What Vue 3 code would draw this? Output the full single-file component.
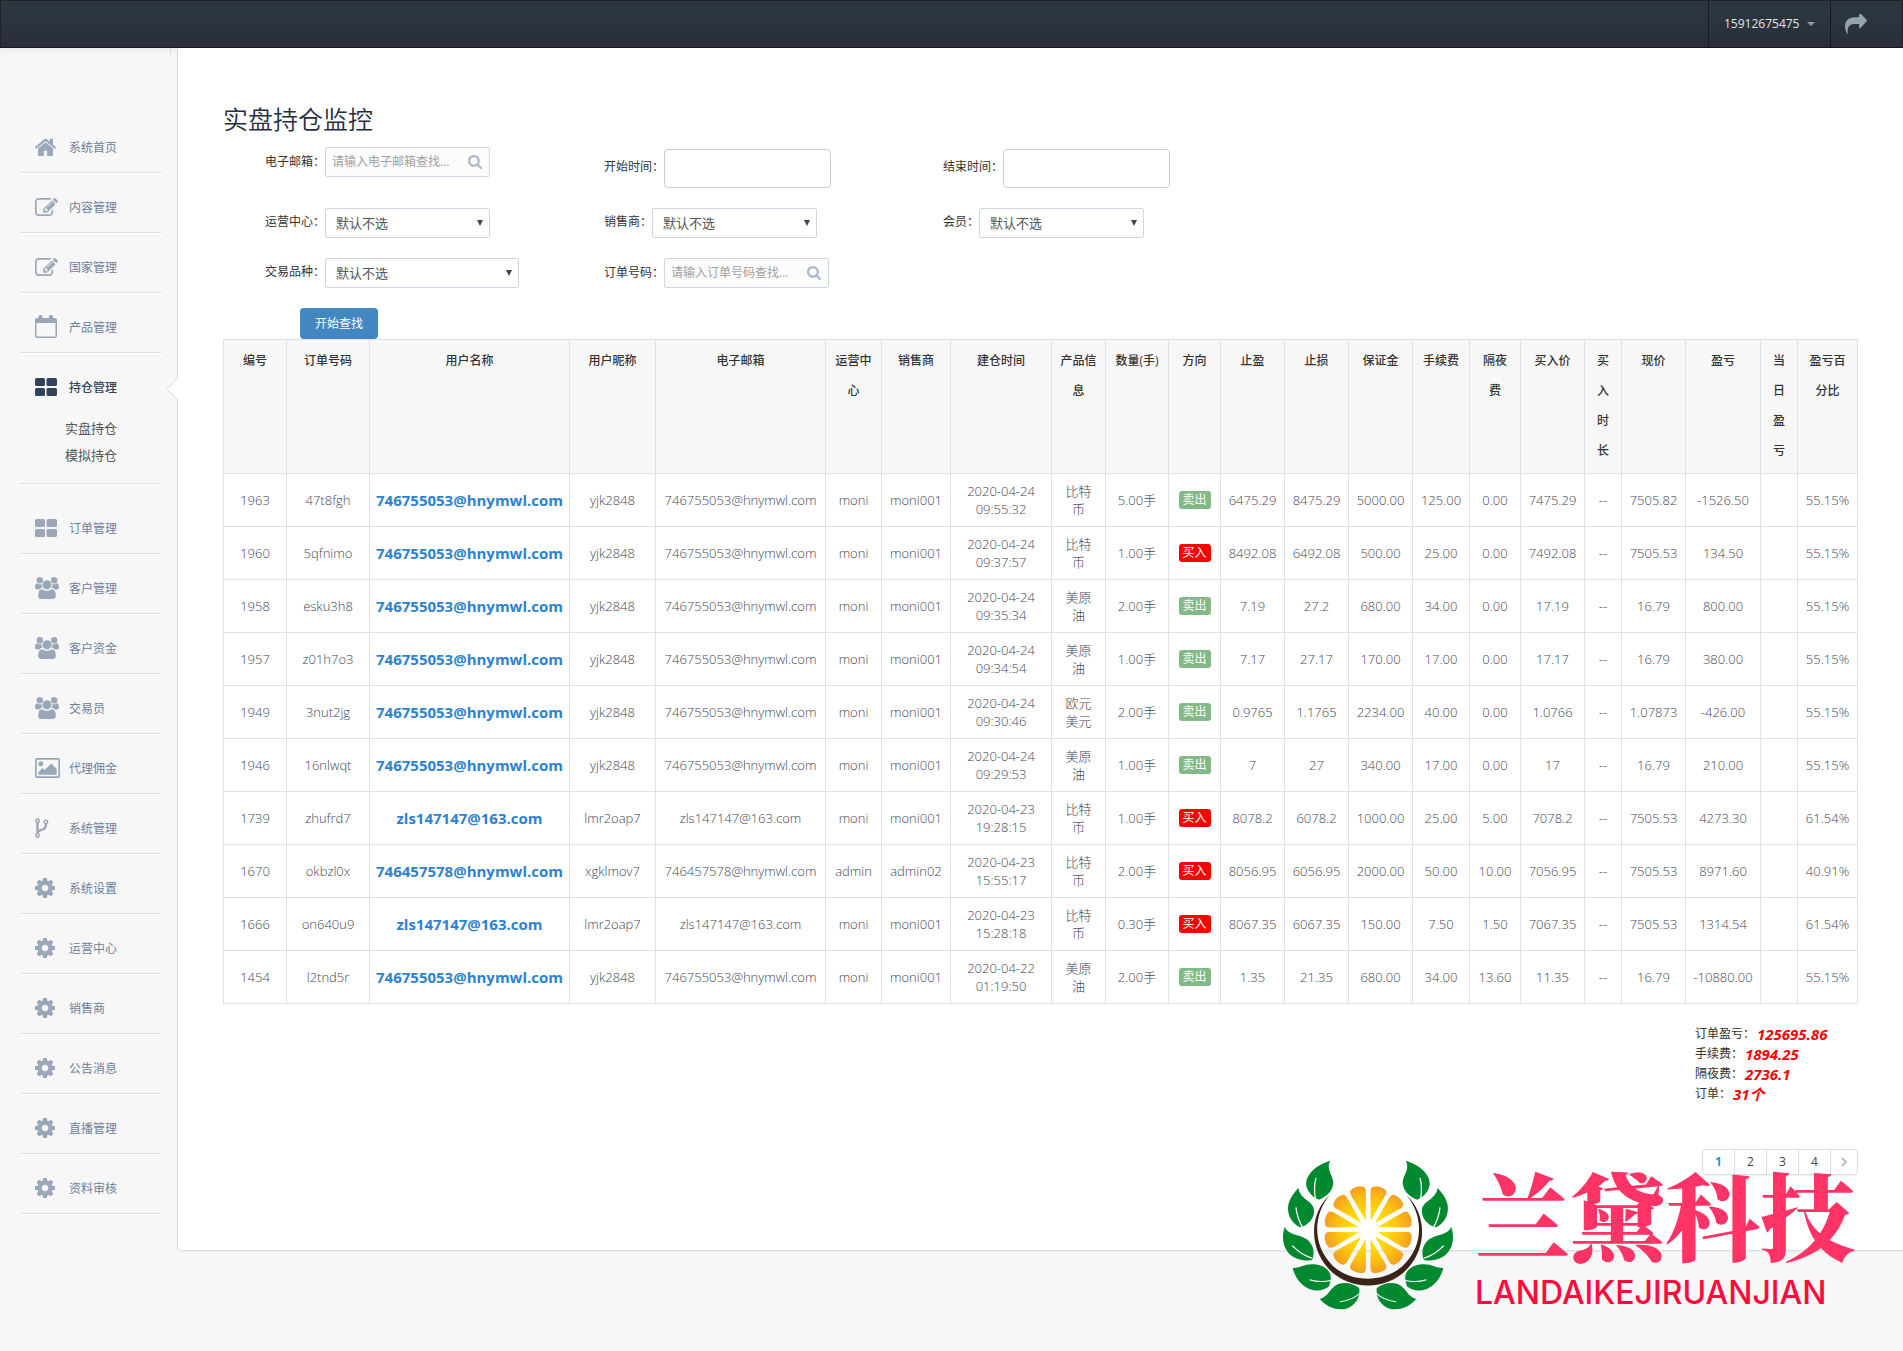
<script setup>
const icons = {
  home: {
    w: 21, h: 18, box: '89 200 1614 1340',
    d: 'M1472 992v480q0 26-19 45t-45 19h-384v-384h-256v384h-384q-26 0-45-19t-19-45v-480q0-1 .5-3t.5-3l575-474 575 474q1 2 1 6zm223-69l-62 74q-8 9-21 11h-3q-13 0-21-7l-692-577-692 577q-12 8-24 7-13-2-21-11l-62-74q-8-10-7-23.500t11-21.500l719-599q32-26 76-26t76 26l244 204v-195q0-14 9-23t23-9h192q14 0 23 9t9 23v408l219 182q10 8 11 21.500t-7 23.500z',
  },
  edit: {
    w: 23, h: 18, box: '0 128 1792 1408',
    d: 'M888 1184l116-116-152-152-116 116v56h96v96h56zm440-720q-16-16-33 1l-350 350q-17 17-1 33t33-1l350-350q17-17 1-33zm80 594v190q0 119-84.500 203.500t-203.500 84.500h-832q-119 0-203.500-84.500t-84.500-203.500v-832q0-119 84.500-203.500t203.500-84.500h832q63 0 117 25 15 7 18 23 3 17-9 29l-49 49q-14 14-32 8-23-6-45-6h-832q-66 0-113 47t-47 113v832q0 66 47 113t113 47h832q66 0 113-47t47-113v-126q0-13 9-22l64-64q15-15 35-7t20 29zm-96-738l288 288-672 672h-288v-288zm444 132l-92 92-288-288 92-92q28-28 68-28t68 28l152 152q28 28 28 68t-28 68z',
  },
  calendar: {
    w: 22, h: 23, box: '0 0 22 23',
    d: 'M2 3H3.500V1.500Q3.500 0 5 0H6Q7.500 0 7.500 1.500V3H14V1.500Q14 0 15.500 0H16.500Q18 0 18 1.500V3H20Q22 3 22 5V21Q22 23 20 23H2Q0 23 0 21V5Q0 3 2 3ZM1.500 8V21.500H20.500V8Z',
  },
  grid: {
    w: 22, h: 18, box: '0 0 22 18',
    d: 'M1.500 0H8.500Q10 0 10 1.500V6.500Q10 8 8.500 8H1.500Q0 8 0 6.500V1.500Q0 0 1.500 0ZM13 0H20.500Q22 0 22 1.500V6.500Q22 8 20.500 8H13Q11.500 8 11.500 6.500V1.500Q11.500 0 13 0ZM1.500 10H8.500Q10 10 10 11.500V16.500Q10 18 8.500 18H1.500Q0 18 0 16.500V11.500Q0 10 1.500 10ZM13 10H20.500Q22 10 22 11.500V16.500Q22 18 20.500 18H13Q11.500 18 11.500 16.500V11.500Q11.500 10 13 10Z',
  },
  users: {
    w: 24, h: 22, box: '0 0 24 22',
    d: 'M12 3.200a4.600 4.600 0 1 1 0 9.200a4.600 4.600 0 1 1 0-9.200ZM4.800 0a3.200 3.200 0 1 1 0 6.400a3.200 3.200 0 1 1 0-6.400ZM19.200 0a3.200 3.200 0 1 1 0 6.400a3.200 3.200 0 1 1 0-6.400ZM7.600 12.200Q12 15.600 16.400 12.200Q20.800 12.200 20.800 18.500Q20.800 22 17.500 22H6.500Q3.200 22 3.200 18.500Q3.200 12.200 7.600 12.200ZM2 6.200Q4 7.500 6.500 7Q6.200 9.500 7.400 10.800Q5.500 10.800 4.200 12.600H2Q0 12.400 0 10.500Q0 6.400 2 6.200ZM22 6.200Q20 7.500 17.500 7Q17.800 9.500 16.600 10.800Q18.500 10.800 19.800 12.600H22Q24 12.400 24 10.500Q24 6.400 22 6.200Z',
  },
  picture: {
    w: 25, h: 20, box: '-64 128 1920 1536',
    d: 'M576 576q0 80-56 136t-136 56-136-56-56-136 56-136 136-56 136 56 56 136zm1024 384v448h-1408v-192l320-320 160 160 512-512zm96-704h-1600q-13 0-22.500 9.500t-9.500 22.500v1216q0 13 9.500 22.500t22.500 9.500h1600q13 0 22.500-9.500t9.500-22.500v-1216q0-13-9.500-22.500t-22.500-9.500zm160 32v1216q0 66-47 113t-113 47h-1600q-66 0-113-47t-47-113v-1216q0-66 47-113t113-47h1600q66 0 113 47t47 113z',
  },
  fork: {
    w: 14, h: 20, box: '0 0 14 20',
    d: 'M2.500 0a2.500 2.500 0 0 1 1.200 4.700V12Q5 11.200 6.500 10.800Q9.600 9.900 9.700 6.200A2.500 2.500 0 1 1 12.100 6.200Q12 11.500 7.500 12.800Q3.800 13.800 3.700 15.300A2.500 2.500 0 1 1 1.300 15.300V4.700A2.500 2.500 0 0 1 2.500 0ZM2.500 1.400a1.100 1.100 0 1 0 0 2.200a1.100 1.100 0 1 0 0-2.200ZM2.500 16.400a1.100 1.100 0 1 0 0 2.200a1.100 1.100 0 1 0 0-2.200ZM10.900 2.900a1.100 1.100 0 1 0 0 2.200a1.100 1.100 0 1 0 0-2.200Z',
  },
  cog: {
    w: 20, h: 20, box: '128 128 1536 1536',
    d: 'M1152 896q0-106-75-181t-181-75-181 75-75 181 75 181 181 75 181-75 75-181zm512-109v222q0 12-8 23t-20 13l-185 28q-19 54-39 91 35 50 107 138 10 12 10 25t-9 23q-27 37-99 108t-94 71q-12 0-26-9l-138-108q-44 23-91 38-16 136-29 186-7 28-36 28h-222q-14 0-24.500-8.500t-11.500-21.500l-28-184q-49-16-90-37l-141 107q-10 9-25 9-14 0-25-11-126-114-165-168-7-10-7-23 0-12 8-23 15-21 51-66.500t54-70.500q-27-50-41-99l-183-27q-13-2-21-12.500t-8-23.500v-222q0-12 8-23t19-13l186-28q14-46 39-92-40-57-107-138-10-12-10-24 0-10 9-23 26-36 98.500-107.500t94.500-71.500q13 0 26 10l138 107q44-23 91-38 16-136 29-186 7-28 36-28h222q14 0 24.500 8.500t11.500 21.500l28 184q49 16 90 37l142-107q9-9 24-9 13 0 25 10 129 119 165 170 7 8 7 22 0 12-8 23-15 21-51 66.500t-54 70.500q26 50 41 98l183 28q13 2 21 12.500t8 23.500z',
  },
}

const menu = [
  { text: '系统首页', icon: 'home' },
  { text: '内容管理', icon: 'edit' },
  { text: '国家管理', icon: 'edit' },
  { text: '产品管理', icon: 'calendar' },
  { text: '持仓管理', icon: 'grid', children: ['实盘持仓', '模拟持仓'] },
  { text: '订单管理', icon: 'grid' },
  { text: '客户管理', icon: 'users' },
  { text: '客户资金', icon: 'users' },
  { text: '交易员', icon: 'users' },
  { text: '代理佣金', icon: 'picture' },
  { text: '系统管理', icon: 'fork' },
  { text: '系统设置', icon: 'cog' },
  { text: '运营中心', icon: 'cog' },
  { text: '销售商', icon: 'cog' },
  { text: '公告消息', icon: 'cog' },
  { text: '直播管理', icon: 'cog' },
  { text: '资料审核', icon: 'cog' },
]

const fields = [
  { id: 'email', label: '电子邮箱：', type: 'search', hint: '请输入电子邮箱查找...' },
  { id: 'start', label: '开始时间：', type: 'date' },
  { id: 'end', label: '结束时间：', type: 'date' },
  { id: 'center', label: '运营中心：', type: 'select' },
  { id: 'seller', label: '销售商：', type: 'select' },
  { id: 'member', label: '会员：', type: 'select' },
  { id: 'product', label: '交易品种：', type: 'select', wide: true },
  { id: 'order', label: '订单号码：', type: 'search', hint: '请输入订单号码查找...' },
]

const columns = [
  ['编号', 63], ['订单号码', 83], ['用户名称', 200], ['用户昵称', 86], ['电子邮箱', 170],
  ['运营中心', 56], ['销售商', 69], ['建仓时间', 101], ['产品信息', 54], ['数量(手)', 63],
  ['方向', 52], ['止盈', 64], ['止损', 64], ['保证金', 64], ['手续费', 57], ['隔夜费', 51],
  ['买入价', 64], ['买入时长', 37], ['现价', 64], ['盈亏', 75], ['当日盈亏', 37], ['盈亏百分比', 60],
]

const hn = '746755053@hnymwl.com'
const zls = 'zls147147@163.com'
const rows = [
  ['1963', '47t8fgh', hn, 'yjk2848', hn, 'moni', 'moni001', '2020-04-24 09:55:32', '比特币', '5.00手', '卖出', '6475.29', '8475.29', '5000.00', '125.00', '0.00', '7475.29', '--', '7505.82', '-1526.50', '', '55.15%'],
  ['1960', '5qfnimo', hn, 'yjk2848', hn, 'moni', 'moni001', '2020-04-24 09:37:57', '比特币', '1.00手', '买入', '8492.08', '6492.08', '500.00', '25.00', '0.00', '7492.08', '--', '7505.53', '134.50', '', '55.15%'],
  ['1958', 'esku3h8', hn, 'yjk2848', hn, 'moni', 'moni001', '2020-04-24 09:35:34', '美原油', '2.00手', '卖出', '7.19', '27.2', '680.00', '34.00', '0.00', '17.19', '--', '16.79', '800.00', '', '55.15%'],
  ['1957', 'z01h7o3', hn, 'yjk2848', hn, 'moni', 'moni001', '2020-04-24 09:34:54', '美原油', '1.00手', '卖出', '7.17', '27.17', '170.00', '17.00', '0.00', '17.17', '--', '16.79', '380.00', '', '55.15%'],
  ['1949', '3nut2jg', hn, 'yjk2848', hn, 'moni', 'moni001', '2020-04-24 09:30:46', '欧元美元', '2.00手', '卖出', '0.9765', '1.1765', '2234.00', '40.00', '0.00', '1.0766', '--', '1.07873', '-426.00', '', '55.15%'],
  ['1946', '16nlwqt', hn, 'yjk2848', hn, 'moni', 'moni001', '2020-04-24 09:29:53', '美原油', '1.00手', '卖出', '7', '27', '340.00', '17.00', '0.00', '17', '--', '16.79', '210.00', '', '55.15%'],
  ['1739', 'zhufrd7', zls, 'lmr2oap7', zls, 'moni', 'moni001', '2020-04-23 19:28:15', '比特币', '1.00手', '买入', '8078.2', '6078.2', '1000.00', '25.00', '5.00', '7078.2', '--', '7505.53', '4273.30', '', '61.54%'],
  ['1670', 'okbzl0x', '746457578@hnymwl.com', 'xgklmov7', '746457578@hnymwl.com', 'admin', 'admin02', '2020-04-23 15:55:17', '比特币', '2.00手', '买入', '8056.95', '6056.95', '2000.00', '50.00', '10.00', '7056.95', '--', '7505.53', '8971.60', '', '40.91%'],
  ['1666', 'on640u9', zls, 'lmr2oap7', zls, 'moni', 'moni001', '2020-04-23 15:28:18', '比特币', '0.30手', '买入', '8067.35', '6067.35', '150.00', '7.50', '1.50', '7067.35', '--', '7505.53', '1314.54', '', '61.54%'],
  ['1454', 'l2tnd5r', hn, 'yjk2848', hn, 'moni', 'moni001', '2020-04-22 01:19:50', '美原油', '2.00手', '卖出', '1.35', '21.35', '680.00', '34.00', '13.60', '11.35', '--', '16.79', '-10880.00', '', '55.15%'],
]

const totals = [
  ['订单盈亏：', '125695.86'],
  ['手续费：', '1894.25'],
  ['隔夜费：', '2736.1'],
  ['订单：', '31个'],
]

const leaves = [
  ['M170 93C125 110 102 150 116 180C122 196 133 205 143 210C165 200 178 180 178 158C177 135 160 120 170 93Z', 'M136 145Q129 172 135 212'],
  ['M93 175C75 198 62 225 70 255C75 275 88 288 98 293C118 285 133 265 131 240C128 212 97 210 93 175Z', 'M87 233Q90 266 104 296'],
  ['M60 291C50 325 56 360 78 380C95 393 112 395 126 391C134 370 130 345 115 330C97 313 68 318 60 291Z', 'M78 348Q98 374 126 386'],
  ['M79 415C100 415 108 402 130 404C155 406 172 422 172 446L168 470C155 484 135 486 118 477C96 464 84 440 79 415Z', 'M120 450Q145 460 174 452'],
  ['M145 508C168 500 168 475 190 463C205 457 225 460 241 475C244 500 235 525 210 537C180 544 160 528 145 508Z', 'M194 516Q225 512 243 490'],
]
const slices = Array.from({ length: 12 }, (_, i) => 15 + i * 30)
</script>

<template>
  <div class="page">
    <header class="navbar">
      <button type="button" class="account">15912675475<span class="caret"></span></button>
      <a href="#" class="logout" aria-label="退出">
        <svg width="22" height="20" viewBox="0 128 1792 1536" preserveAspectRatio="none">
          <path d="M1792 640q0 26-19 45l-512 512q-19 19-45 19t-45-19-19-45v-256h-224q-98 0-175.500 6t-154 21.500-133 42.500-105.500 69.500-80 101-48.500 138.500-17.500 181q0 55 5 123 0 6 2.500 23.500t2.500 26.500q0 15-8.500 25t-23.500 10q-16 0-28-17-7-9-13-22t-13.500-30-10.500-24q-127-285-127-451 0-199 53-333 162-403 875-403h224v-256q0-26 19-45t45-19 45 19l512 512q19 19 19 45z" />
        </svg>
      </a>
    </header>

    <div class="body">
      <nav class="sidebar">
        <ul class="menu">
          <li v-for="m in menu" :key="m.text" :class="{ active: m.children }">
            <a href="#" class="item">
              <span class="icon">
                <svg :width="icons[m.icon].w" :height="icons[m.icon].h" :viewBox="icons[m.icon].box" preserveAspectRatio="none">
                  <path :d="icons[m.icon].d" fill-rule="evenodd" />
                </svg>
              </span>
              {{ m.text }}
              <svg v-if="m.children" class="pointer" width="12" height="22" viewBox="0 0 12 22">
                <path d="M12 0L1 11L12 22" />
              </svg>
            </a>
            <ul v-if="m.children" class="submenu">
              <li v-for="c in m.children" :key="c"><a href="#">{{ c }}</a></li>
            </ul>
          </li>
        </ul>
      </nav>

      <main class="content">
        <h3>实盘持仓监控</h3>

        <form class="filters" @submit.prevent>
          <div v-for="f in fields" :key="f.id" class="field" :class="f.type">
            <label :for="f.id">{{ f.label }}</label>
            <span v-if="f.type === 'search'" class="search-box">
              <input :id="f.id" type="text" :placeholder="f.hint" />
              <svg width="14" height="14" viewBox="64 128 1664 1664">
                <path d="M1216 832q0-185-131.500-316.500t-316.500-131.500-316.500 131.500-131.500 316.500 131.500 316.500 316.500 131.500 316.500-131.500 131.500-316.500zm512 832q0 52-38 90t-90 38q-54 0-90-38l-343-342q-179 124-399 124-143 0-273.500-55.500t-225-150-150-225-55.500-273.500 55.500-273.500 150-225 225-150 273.500-55.500 273.500 55.500 225 150 150 225 55.500 273.500q0 220-124 399l343 343q37 37 37 90z" />
              </svg>
            </span>
            <input v-else-if="f.type === 'date'" :id="f.id" type="text" class="date-input" />
            <span v-else class="select-box" :class="{ wide: f.wide }">
              <select :id="f.id"><option>默认不选</option></select>
            </span>
          </div>
          <div class="actions"><button type="submit">开始查找</button></div>
        </form>

        <table>
          <colgroup>
            <col v-for="c in columns" :key="c[0]" :style="{ width: c[1] + 'px' }" />
          </colgroup>
          <thead>
            <tr><th v-for="c in columns" :key="c[0]" scope="col">{{ c[0] }}</th></tr>
          </thead>
          <tbody>
            <tr v-for="r in rows" :key="r[0]">
              <td v-for="(v, i) in r" :key="i" :class="{ product: i === 8 }">
                <a v-if="i === 2" href="#" class="name">{{ v }}</a>
                <span v-else-if="i === 10" class="tag" :class="{ buy: v === '买入' }">{{ v }}</span>
                <template v-else>{{ v }}</template>
              </td>
            </tr>
          </tbody>
        </table>

        <div class="totals">
          <div v-for="t in totals" :key="t[0]">{{ t[0] }}<em>{{ t[1] }}</em></div>
        </div>

        <nav class="pager" aria-label="分页">
          <a v-for="n in 4" :key="n" href="#" :class="{ current: n === 1 }">{{ n }}</a>
          <a href="#" class="next" aria-label="下一页">
            <svg width="7" height="10" viewBox="0 0 7 10"><path d="M1 1L5 5L1 9" /></svg>
          </a>
        </nav>
      </main>
    </div>

    <div class="brand">
      <svg class="emblem" width="172" height="150" viewBox="53 91 419 450" preserveAspectRatio="none">
        <defs>
          <radialGradient id="juice" gradientUnits="userSpaceOnUse" cx="0" cy="0" r="109">
            <stop offset="0.400" stop-color="#ffdc00" />
            <stop offset="0.700" stop-color="#fbc010" />
            <stop offset="1" stop-color="#f39c1f" />
          </radialGradient>
        </defs>
        <path d="M170 195C120 250 118 350 165 415C215 485 310 485 360 415C408 350 405 250 355 195C398 255 398 345 352 402C308 462 215 462 172 402C128 345 128 255 170 195Z" fill="#3a2317" />
        <ellipse cx="263" cy="300" rx="24" ry="29" fill="#fff" />
        <g transform="translate(263 300) scale(1 1.230)" fill="url(#juice)">
          <path v-for="a in slices" :key="a" :transform="`rotate(${a})`" d="M0-24L-18-88Q-23-104-12-106Q0-111 12-106Q23-104 18-88Z" />
        </g>
        <g v-for="side in ['translate(0 0)', 'translate(525 0) scale(-1 1)']" :key="side" :transform="side">
          <template v-for="l in leaves" :key="l[0]">
            <path :d="l[0]" fill="#00892f" />
            <path :d="l[1]" fill="none" stroke="#fff" stroke-width="3" />
          </template>
        </g>
      </svg>
      <div class="wordmark">
        <div class="cn">兰黛科技</div>
        <div class="en">LANDAIKEJIRUANJIAN</div>
      </div>
    </div>
  </div>
</template>

<style>
body {
  background: #f7f7f7;
}
</style>

<style scoped>
.page {
  position: relative;
  min-height: 100vh;
  font: 12px/20px "Open Sans", "Noto Sans CJK SC", sans-serif;
  color: #333;
}
.page *,
.page *::before,
.page *::after {
  box-sizing: border-box;
}
a {
  text-decoration: none;
}
ul {
  list-style: none;
  margin: 0;
  padding: 0;
}
input,
select,
button {
  font: inherit;
  margin: 0;
}

.navbar {
  display: flex;
  justify-content: flex-end;
  height: 48px;
  border: 1px solid #222;
  border-bottom-color: #181824;
  background: linear-gradient(#2c3742, #292f3a);
  box-shadow: 0 1px 8px rgba(0, 0, 0, 0.08);
}
.account {
  display: flex;
  align-items: center;
  gap: 8px;
  width: 123px;
  padding: 0 0 0 15px;
  border: 0;
  border-left: 1px solid #151a20;
  border-right: 1px solid #151a20;
  background: none;
  color: #e1e4e8;
}
.caret {
  border: 4px solid transparent;
  border-top-color: #999;
  border-bottom: 0;
}
.logout {
  display: flex;
  align-items: center;
  width: 71px;
  padding-left: 14px;
}
.logout svg {
  fill: #95a2b0;
}

.body {
  display: flex;
  align-items: flex-start;
}
.sidebar {
  position: relative;
  flex: none;
  width: 177px;
  padding: 65px 15px 0 20px;
}
.sidebar::before {
  content: "";
  position: absolute;
  top: 0;
  right: 6px;
  height: 10px;
  border-left: 1px solid #dbe1e8;
}
.item {
  position: relative;
  display: flex;
  align-items: center;
  height: 60px;
  padding: 10px 0 0 15px;
  border-bottom: 1px solid #dbe1e8;
  box-shadow: 0 1px 0 #fff;
  color: #6d819c;
}
.icon {
  display: flex;
  width: 34px;
  padding-bottom: 2px;
}
.icon svg {
  fill: #9aa7b9;
}
.active > .item {
  border: 0;
  box-shadow: none;
  color: #32435a;
  font-weight: 500;
}
.active > .item .icon svg {
  fill: #32435a;
}
.pointer {
  position: absolute;
  right: -16px;
  top: 25px;
  z-index: 1;
  fill: #fff;
  stroke: #d8e0e6;
}
.submenu {
  margin: 0 2px 10px 0;
  padding: 2px 0 14px 45px;
  border-bottom: 1px solid #dbe1e8;
  box-shadow: 0 1px 0 #fff;
  font-size: 13px;
  line-height: 27px;
}
.submenu a {
  color: #555;
}

.content {
  flex: 1;
  min-width: 0;
  padding: 51px 45px 75px;
  border: 1px solid #d8e0e8;
  border-width: 0 0 1px 1px;
  border-radius: 0 0 0 5px;
  background: #fff;
  box-shadow: 0 1px 3px rgba(0, 0, 0, 0.06);
}
h3 {
  margin: 0 0 8px;
  font-size: 25px;
  font-weight: 350;
  line-height: 40px;
  color: #262f3d;
}

.filters {
  display: grid;
  grid-template-columns: repeat(3, 339px);
  row-gap: 20px;
  align-items: start;
  padding-left: 42px;
}
.field {
  display: flex;
  align-items: center;
}
.date {
  padding-top: 2px;
}
.date label,
.select label {
  padding-bottom: 3px;
}
.search-box {
  display: flex;
  align-items: center;
  width: 165px;
  height: 30px;
  padding: 0 7px 0 6px;
  border: 1px solid #cbd9e7;
  border-radius: 2px;
  background: #fcfcfc;
}
.search-box input {
  flex: 1;
  min-width: 0;
  padding: 0;
  border: 0;
  outline: 0;
  background: none;
}
.search-box input::placeholder {
  color: #a0a0a0;
}
.search-box svg {
  fill: #a9b8c9;
}
.date-input {
  width: 167px;
  height: 39px;
  padding: 0 10px;
  border: 1px solid #ccc;
  border-radius: 4px;
  background: #fff;
}
.select-box {
  position: relative;
  width: 165px;
}
.select-box.wide {
  width: 194px;
}
.select-box::after {
  content: "";
  position: absolute;
  right: 7px;
  top: 12px;
  border: 3px solid transparent;
  border-top: 6px solid #444;
  border-bottom: 0;
}
select {
  display: block;
  width: 100%;
  height: 30px;
  padding: 0 10px;
  border: 1px solid #cbd9e7;
  border-radius: 2px;
  appearance: none;
  background: #fff;
  color: #555;
  font-size: 13px;
}
.actions {
  grid-column: 1 / -1;
  padding-left: 35px;
}
.actions button {
  display: block;
  height: 31px;
  padding: 0 15px;
  border: 0;
  border-radius: 4px;
  background: #4287c0;
  color: #fff;
}

table {
  width: 100%;
  table-layout: fixed;
  border-collapse: collapse;
  text-align: center;
}
th,
td {
  padding: 8px 6px;
  border: 1px solid #dde1e8;
}
th {
  padding: 6px 8px 7px;
  background: #f7f7f7;
  font-weight: 500;
  line-height: 30px;
  vertical-align: top;
}
td {
  height: 53px;
  color: #3f4758;
  font-size: 13px;
  font-weight: 300;
  line-height: 18px;
}
.product {
  padding: 8px;
}
.name {
  color: #2d82d0;
  font-size: 15px;
  font-weight: 700;
}
.tag {
  display: block;
  width: 32px;
  margin: 0 auto;
  border-radius: 3px;
  background: #82b986;
  color: #fff;
  font-size: 12px;
  font-weight: 400;
}
.tag.buy {
  background: #f00;
}

.totals {
  width: 163px;
  margin: 20px 0 0 auto;
}
.totals div {
  display: flex;
  align-items: center;
  gap: 2px;
  height: 20px;
}
.totals em {
  color: #f00;
  font-size: 15px;
  font-weight: 700;
}
.pager {
  display: flex;
  width: 156px;
  height: 26px;
  margin: 45px 0 0 auto;
  border: 1px solid #ddd;
  border-radius: 4px;
  box-shadow: 0 1px 2px rgba(0, 0, 0, 0.06);
  line-height: 24px;
  text-align: center;
}
.pager a {
  width: 32px;
  border-right: 1px solid #ddd;
  color: #444;
}
.pager .current {
  color: #2a91e8;
  font-weight: 700;
}
.pager .next {
  display: flex;
  align-items: center;
  justify-content: center;
  width: 26px;
  border: 0;
}
.next path {
  fill: none;
  stroke: #b9c1cc;
  stroke-width: 2;
}

.brand {
  position: absolute;
  right: 45px;
  bottom: 41px;
  display: flex;
  align-items: flex-start;
  gap: 21px;
  height: 150px;
  pointer-events: none;
}
.wordmark {
  width: 383px;
  white-space: nowrap;
}
.cn {
  color: #f36;
  font: 900 95px/106px "Noto Serif CJK SC", "Noto Sans CJK SC", serif;
}
.en {
  color: #ff0a3c;
  font: 500 32px/54px Inter, sans-serif;
}
</style>
